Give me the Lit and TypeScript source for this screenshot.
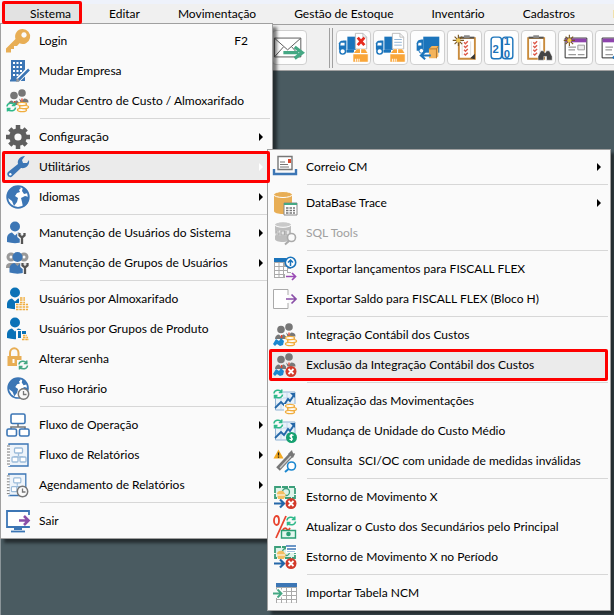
import { LitElement, html, svg, css, nothing, TemplateResult } from "lit";
import { customElement, property } from "lit/decorators.js";
import { classMap } from "lit/directives/class-map.js";

type Art = TemplateResult;

/* ---- shared icon fragments, on a 24 x 24 grid ---- */
const heads = svg`
  <circle cx="8" cy="6.500" r="3.800" fill="#777"/><circle cx="16" cy="4" r="3.800" fill="#777"/>
  <path d="M2 16c0-3 2-4.500 4-4.500l2 2 2-2h1l2 2V16zM13 9.500l3 2.500 2-2.500c3 0 4.500 1 4.500 4h-8z" fill="#777"/>
  <path d="M8.500 12v3M16 9.500v3" stroke="#e8432d" stroke-width="1.300"/>`;
const coins = (x: number, y: number) => svg`<g transform="translate(${x} ${y})" fill="#fff" stroke="#f0ad3e" stroke-width="1.400">
  <ellipse cx="5" cy="9" rx="4.500" ry="1.600"/><ellipse cx="7" cy="6" rx="4.500" ry="1.600"/><ellipse cx="5" cy="3" rx="4.500" ry="1.600"/></g>`;
const xBadge = svg`<circle cx="18" cy="18.500" r="5.500" fill="#d23a2a"/><path d="M15.500 16l5 5m0-5l-5 5" stroke="#fff" stroke-width="1.800"/>`;
const recycle = (x: number, y: number, c: string) => svg`<g transform="translate(${x} ${y})" fill="none" stroke="${c}" stroke-width="1.500">
  <path d="M1 4.500A4 3.500 0 0 1 8.500 3M9.500 5.500A4 3.500 0 0 1 2 7M8.800.500V3.500H5.800M1.500 9.500V6.500H4.500"/></g>`;
const chart = svg`<path d="M2.500 3h19.500v18h-19.500z" fill="#e9f2fa" stroke="#8fb3d3"/>
  <path d="M3 9h18M3 15h18M8 4v17M14 4v17" stroke="#b7cfe6" stroke-width=".7"/>
  <path d="M2 19l6-6 3 3 4-6 2 2 4-6" fill="none" stroke="#2467a8" stroke-width="1.800"/><path d="M17 4h5v5z" fill="#2467a8"/>
  <path d="M0 0h10v9H0z" fill="#fafafa"/>${recycle(0, 0, "#2fb98a")}`;
const note = svg`<path d="M2 2h20v11H2z" fill="#dff3ea" stroke="#3c9f7a" stroke-width="1.800" stroke-dasharray="6 1"/><circle cx="13" cy="7" r="3.500" fill="none" stroke="#3c9f7a" stroke-width="1.300"/>
  <path d="M4 9c0-3 3-3.500 6-3l3 4-2 4H5z" fill="#f3bf62"/><path d="M3 10h9" stroke="#fff"/>
  <path d="M0 14h12v10H0z" fill="#fafafa"/><path d="M1 18.500h9M7 14.500l4 4L7 22.500" fill="none" stroke="#2467a8" stroke-width="2.200"/>${xBadge}`;
const clock = (x: number, y: number) => svg`<circle cx="${x}" cy="${y}" r="5.200" fill="#fafafa" stroke="#777" stroke-width="1.500"/><path d="M${x} ${y - 3}v3.500h3" fill="none" stroke="#777" stroke-width="1.300"/>`;
const spanner = svg`<path d="M16 23v-6m-2.500-5v3l2.500 2 2.500-2v-3" fill="none" stroke="#fafafa" stroke-width="4.500"/><path d="M16 23v-7m-2.500-4v2.500l2.500 2 2.500-2V12" fill="none" stroke="#555" stroke-width="2.300"/>`;
const person = (c: string) => svg`<circle cx="9" cy="5.500" r="5" fill="${c}"/><path d="M1 21v-3c0-4 2-6 5-6.500l3 3 3-3c3 .5 5 2 5 6V21c-5 1.500-11 1.500-16 0z" fill="${c}"/>`;
const globe = svg`<circle cx="12" cy="12" r="10.800" fill="#fff" stroke="#3c76b5" stroke-width="1.800"/>
  <path d="M2 8c2-5 6-7 10-7l3 2-2 2 1 2-3 1-2 3 3 2-1 4-3 4-2-5-4-3z" fill="#3c76b5"/><path d="M17 2l3 2 2 4-4 1-2-3zM15 13l4-2 4 1c0 5-3 9-6 10l-1-5z" fill="#3c76b5"/>`;
const notebook = svg`<path d="M3 1h19v22H3z" fill="#eef4fa" stroke="#3c76b5" stroke-width="1.400"/>
  <path d="M3 2v21" stroke="#fff" stroke-width="2"/><path d="M1 3h3M1 6h3M1 9h3M1 12h3M1 15h3M1 18h3M1 21h3" stroke="#777"/>
  <g fill="#fff" stroke="#9cbcda" stroke-width="1.300"><path d="M12.500 9v4M8 14h9" /><rect x="8.500" y="5" width="8" height="5" rx="1"/><rect x="6" y="14" width="6" height="5" rx="1"/><rect x="14" y="14" width="6" height="5" rx="1"/></g>`;

const art: Record<string, Art> = {
  key: svg`<path fill-rule="evenodd" d="M16.500 0a7.500 7.500 0 1 1-3 14.300L11 17H8v3H5v3.500H0V19.500L9.500 10A7.500 7.500 0 0 1 16.500 0zM18 3.300a2.700 2.700 0 1 0 .01 0z" fill="#e8ae55"/>`,
  building: svg`<path d="M5 1h14v21H5z" fill="#3c76b5"/><path d="M7 4h10M7 8h10M7 12h10M7 16h7" stroke="#fff" stroke-width="2" stroke-dasharray="2 1.500"/>
    <path d="M4 21.500h9" stroke="#3c76b5" stroke-width="2"/><path d="M12 21L23 10" stroke="#fff" stroke-width="5"/><path d="M12 21.500L23 10.500" stroke="#3c76b5" stroke-width="2.500"/><path d="M10 23l1-4 3 3z" fill="#999"/>`,
  center: svg`${heads}<path d="M0 14h8v10H0zM11 14h13v10H11z" fill="#fafafa"/>${recycle(0, 13, "#2fb98a")}${coins(11, 12)}`,
  gear: svg`<g stroke="#5f5f5f" stroke-width="4.500"><path d="M12 0v24M0 12h24M3.800 3.800l16.400 16.400M20.200 3.800L3.800 20.200"/></g><circle cx="12" cy="12" r="8.800" fill="#5f5f5f"/><circle cx="12" cy="12" r="3.600" fill="#fafafa"/>`,
  wrench: svg`<path d="M2 21c-1-1-1-3 0-4L12 9c-1-4 2-8 7-8l-3 4 1 3 4 0 2-3c1 5-3 9-8 8L6 21.500c-1 1-3 1-4-.5z" fill="#3c76b5"/><circle cx="4.300" cy="19.300" r="1.200" fill="#fff"/>`,
  globe,
  user: svg`${person("#3c76b5")}${spanner}`,
  group: svg`<g fill="none" stroke="#999" stroke-width="3"><circle cx="5" cy="6" r="3"/><circle cx="18" cy="6" r="3"/></g><path d="M0 16c0-3 2-4 4-4h15c3 0 4 2 4 5H0z" fill="#999"/><g transform="translate(2.500 .5)">${person("#3c76b5")}</g><g transform="translate(3 0)">${spanner}</g>`,
  userCoins: svg`${person("#0a72b7")}<path d="M9 16h15v8H9zM13 10h7v6h-7z" fill="#fafafa"/><path d="M14 11h5M14 13h5M14 15.500h5M10 17.500h12M10 20h13M10 22.500h12" stroke="#f0ad3e" stroke-width="1.600" stroke-dasharray="2.500 .8"/>`,
  userBoxes: svg`${person("#0a72b7")}<path d="M10 13h14v11H10z" fill="#fafafa"/><path d="M12 14h3v7h-3zM16 14h4v3h-4z" fill="#0a72b7"/><path d="M17 18.500h4M17 20.500h5M16 22.500h7" stroke="#f0ad3e" stroke-width="1.700" stroke-dasharray="2.500 .8"/>`,
  lock: svg`<path d="M4 9V6a4 4.500 0 0 1 8.500 0v3" fill="none" stroke="#e8ae55" stroke-width="2"/><path d="M1.500 9h14v10h-14z" fill="#e8ae55"/><path d="M7.500 12v4" stroke="#fff" stroke-width="2"/><path d="M11 13h13v11H11z" fill="#fafafa"/>${recycle(12, 13, "#45a884")}`,
  timezone: svg`<g transform="translate(1 0) scale(.92)">${globe}</g>${clock(17.500, 17)}`,
  flow: svg`<path d="M12 10v4M5 16v-2h14v2" fill="none" stroke="#777" stroke-width="1.600"/><g fill="#fff" stroke="#3c76b5" stroke-width="1.600"><rect x="5" y="1" width="14" height="9.500" rx="1.500"/><rect x="1" y="16" width="9.500" height="7" rx="1.500"/><rect x="13.500" y="16" width="9.500" height="7" rx="1.500"/></g>`,
  report: notebook,
  schedule: svg`<g transform="scale(.9 .98)">${notebook}</g>${clock(16.500, 18.500)}`,
  exit: svg`<path d="M1 2h22v16H1z" fill="#fff" stroke="#3c76b5" stroke-width="1.800"/><path d="M8 18h8v3H8z" fill="#3c76b5"/><path d="M5 22.500h14" stroke="#3c76b5" stroke-width="1.800"/><path d="M23 6v11" stroke="#fafafa" stroke-width="2.500"/><path d="M13 11.500h9M18 7l4.500 4.500L18 16" fill="none" stroke="#8a4fa8" stroke-width="2.600"/>`,
  mail: svg`<path d="M5 1.500h14v13H5z" fill="#fff" stroke="#777" stroke-width="1.400"/><path d="M15 4h3v4h-3z" fill="#d9492f"/><path d="M7 7h5M7 9.500h8M7 12h9" stroke="#777"/><path d="M1 14v5h22v-5" fill="none" stroke="#3c76b5" stroke-width="2.400"/>`,
  database: svg`<path d="M1 3v17c0 4 17 4 18 0V3z" fill="#e8ae55"/><ellipse cx="10" cy="3.500" rx="9.300" ry="3" fill="#e8ae55" stroke="#fff" stroke-width="1"/><path d="M11 12h13v12H11z" fill="#fff" stroke="#888"/><path d="M11 13h13" stroke="#45a884" stroke-width="2"/><path d="M13 17h9M13 19.500h9M13 22h9" stroke="#777" stroke-width="1.300" stroke-dasharray="2.500 1"/>`,
  sql: svg`<path d="M2 3v15c0 4 15 4 16 0V3z" fill="#bdbdbd"/><ellipse cx="10" cy="3.500" rx="8.300" ry="2.800" fill="#c9c9c9" stroke="#fff"/><path d="M2 9.500h14v5H2z" fill="#e6e6e6"/><path d="M6 10H3v2h3v2H3M8 10h3.500v4H8zM13 10v4h3" fill="none" stroke="#aaa" stroke-width="1.200"/><circle cx="18.500" cy="16.500" r="4" fill="#fafafa" stroke="#aaa" stroke-width="1.600"/><path d="M16 20l-4 3.500" stroke="#aaa" stroke-width="2"/>`,
  exportTable: svg`<path d="M1 1h17v20H1z" fill="#aaa"/><path d="M1 1h12v4H1z" fill="#1b74bb"/><g fill="#fff"><path d="M2 6h3.500v3H2zM6.500 6H10v3H6.500zM2 10h3.500v3H2zM6.500 10H10v3H6.500zM2 14h3.500v3H2zM6.500 14H10v3H6.500zM11 10h3v3h-3zM11 14h3v3h-3zM15 12h3v3h-3zM2 18h3.500v2H2zM6.500 18H10v2H6.500z"/></g>
    <circle cx="17.500" cy="5.500" r="5.200" fill="#fff" stroke="#1b74bb" stroke-width="1.600"/><path d="M17.500 9V3.500M15 5.500l2.500-2.500L20 5.500" fill="none" stroke="#1b74bb" stroke-width="1.500"/><path d="M12 16h12v8H12z" fill="#fafafa"/><path d="M13 19.500h9M19 16l3.500 3.500L19 23" fill="none" stroke="#9a4bb5" stroke-width="1.700"/>`,
  exportPage: svg`<path d="M15 8V2.500H.5v19H15V16" fill="#fff" stroke="#aaa"/><path d="M13 12h9M18.500 7.500L23 12l-4.500 4.500" fill="none" stroke="#8a4fa8" stroke-width="1.700"/>`,
  integrate: svg`${heads}<path d="M0 21l3-5 3 2 2-3 3 3-1 4-3 1-3-2-2 2z" fill="#1b87cf"/><path d="M12 14h12v10H12z" fill="#fafafa"/>${coins(12, 12)}`,
  exclude: svg`${heads}<path d="M0 21l3-5 3 2 2-3 3 3-1 4-3 1-3-2-2 2z" fill="#1b87cf"/>${xBadge}`,
  chartCoins: svg`${chart}<path d="M11 15h13v9H11z" fill="#fafafa"/>${coins(12, 14)}`,
  chartMoney: svg`${chart}<circle cx="18.500" cy="18.500" r="5.500" fill="#16a070"/><path d="M20.500 16.500c-3-1.500-4.500.5-2.500 1.800s2 3.500-1.500 2M18.500 15v7" fill="none" stroke="#fff" stroke-width="1.200"/>`,
  warning: svg`<path d="M5 20L20 4" stroke="#777" stroke-width="5"/><path d="M7 19L19 6" stroke="#ccc" stroke-width="1.300"/><path d="M15 5l4-4 1 4 2-1-2 5z" fill="#777"/><path d="M.5 9.500L5.500.5l5 9z" fill="#f4a91f"/><path d="M5.500 3.500v3M5.500 7.500v1.200" stroke="#222" stroke-width="1.300"/><circle cx="18.500" cy="17" r="4" fill="#fff" stroke="#1b87cf" stroke-width="1.600"/><path d="M15.500 20L12 23" stroke="#1b87cf" stroke-width="2"/>`,
  reverse: note,
  percent: svg`<ellipse cx="3.500" cy="5.500" rx="2.500" ry="4.500" fill="none" stroke="#e8432d" stroke-width="1.800"/><path d="M13 1L3 23" stroke="#e8432d" stroke-width="1.800"/><path d="M9 20c0-7 4-9 6-4l2-3" fill="none" stroke="#e8432d" stroke-width="1.800"/>${recycle(13, 1, "#2fb98a")}<path d="M8.500 15.500h14v7.500h-14z" fill="#e3f6ee" stroke="#2a9f74" stroke-width="1.400"/><circle cx="15.500" cy="19" r="2.300" fill="#2a9f74"/>`,
  reversePeriod: svg`${note}<path d="M13 0h11v8H13z" fill="#fff"/><path d="M13 1h10M14 4h9" stroke="#3c76b5" stroke-width="1.400"/><path d="M14 6.500h8" stroke="#aac6e0"/>`,
  importTable: svg`<path d="M3 2h21v20H3z" fill="#aaa"/><path d="M3 2h21v4H3z" fill="#3c76b5"/><path d="M4 8.500h19M4 12.500h19M4 16.500h19M4 20.300h19" stroke="#fff" stroke-width="2.800" stroke-dasharray="4 1"/><path d="M0 8.500h9l2 3.500-3 5H0z" fill="#fafafa"/><path d="M0 12.500h8M4.500 8.500l4 4-4 4" fill="none" stroke="#45a884" stroke-width="1.800"/>`,
};

/* ---- toolbar artwork, on a 35 x 35 grid ---- */
const van = svg`<path d="M11 6h11v14H11z" fill="#1b74bb"/><path d="M2 13c1-3 3-3 8-3v10H2z" fill="#1b74bb"/><path d="M4 12.500h4v3H3.500z" fill="#fff"/><circle cx="6" cy="21.500" r="3" fill="#fff" stroke="#1b74bb" stroke-width="1.500"/><path d="M10 20h8v3h-8z" fill="#1b74bb"/>`;
const box = svg`<path d="M17 24l4-5h9l3 5v9H17z" fill="#f9a63a" stroke="#fff" stroke-width=".6"/><path d="M17 24h16M25 19v5" stroke="#fff" stroke-width="1.200"/><path d="M19 31h5" stroke="#fff" stroke-dasharray="1 1" stroke-width="3"/>`;
const doc = svg`<path d="M19.500 2.500h8l4 4V19h-12z" fill="#fff" stroke="#bbb"/><path d="M27.500 2.500v4h4" fill="none" stroke="#bbb"/>`;
const board = svg`<path d="M11.500 7.500h17v22h-17z" fill="#fff" stroke="#c98b3c" stroke-width="2"/><path d="M12 6h16v2H12z" fill="#555"/><path d="M17 4.500h6v3h-6z" fill="#888"/><path d="M17 12l1.500 1.500L21 11M17 16l1.500 1.500L21 15M17 20l1.500 1.500L21 19M17 24l1.500 1.500L21 23" fill="none" stroke="#dd5a4a" stroke-width="1.500"/><path d="M15 11v15M24 11v15" stroke="#ddd"/><path d="M28.500 30l-5-1 5-5z" fill="#333"/>`;
const spark = svg`<path d="M11 4v12M5 10h12M7 6l8 8M15 6l-8 8" stroke="#7a5720" stroke-width="1.200"/><circle cx="11" cy="10" r="2.200" fill="#f2c94c"/>`;
const form = svg`<path d="M6.500 7.500h23v21h-23z" fill="#fff" stroke="#222"/><path d="M7 8h22v4H7z" fill="#8e44ad"/><path d="M10 17h8M10 20h7M10 25h8M20 25h7" stroke="#999" stroke-width="1.300"/><path d="M20 15h7v5h-7z" fill="#eee" stroke="#999"/>`;

const toolArt: { label: string; art: Art }[] = [
  { label: "Excluir entrada", art: svg`${van}${doc}<path d="M22 7l7 8m0-8l-7 8" stroke="#e62b1e" stroke-width="3"/>${box}` },
  { label: "Documento de entrada", art: svg`${van}${doc}<path d="M21.500 9h8M21.500 12h8M21.500 15h8" stroke="#8fb3d3"/>${box}` },
  { label: "Devolução", art: svg`<path d="M13 6h17v17H13z" fill="#1b74bb"/><path d="M6 13c1-3 2-4 7-4v12H6z" fill="#1b74bb"/><path d="M8 12.500h3v3H7.500z" fill="#fff"/><circle cx="11" cy="21" r="2.500" fill="#fff" stroke="#1b74bb"/><path d="M19 19l3-3h7v11l-3 2h-7z" fill="#f4b45c"/><path d="M19 19h8v10M27 19l2-3" fill="none" stroke="#b5762a"/><path d="M21 26H12M15 22l-4.500 4 4.500 4" fill="none" stroke="#1b74bb" stroke-width="2.200"/>` },
  { label: "Nova requisição", art: svg`${board}${spark}` },
  { label: "Calendário", art: svg`<rect x="6.500" y="6.500" width="11" height="23" rx="3" fill="#fff" stroke="#1b74bb" stroke-width="1.500"/><rect x="18.500" y="6.500" width="11" height="23" rx="3" fill="#fff" stroke="#1b74bb" stroke-width="1.500"/><text x="8" y="23" class="digit">2</text><text x="20" y="15" class="digit">1</text><text x="20" y="29" class="digit">0</text>` },
  { label: "Localizar requisição", art: svg`<g transform="translate(-5 0)">${board}</g><path d="M17 31v-4l3-6h3l1 2h1l1-2h3l3 6v4h-6v-4h-3v4z" fill="#444" stroke="#fff" stroke-width=".5"/>` },
  { label: "Novo cadastro", art: svg`${form}${spark}` },
  { label: "Editar cadastro", art: svg`${form}<path d="M17 28l6-6 3 3-6 6z" fill="#1b74bb"/>` },
];

interface Item {
  label: string;
  icon: string;
  key?: string;
  more?: boolean;
  marked?: boolean;
  off?: boolean;
  submenu?: Item[][];
}

const utilitiesMenu: Item[][] = [
  [{ label: "Correio CM", icon: "mail", more: true }],
  [
    { label: "DataBase Trace", icon: "database", more: true },
    { label: "SQL Tools", icon: "sql", off: true },
  ],
  [
    { label: "Exportar lançamentos para FISCALL FLEX", icon: "exportTable" },
    { label: "Exportar Saldo para FISCALL FLEX (Bloco H)", icon: "exportPage" },
  ],
  [
    { label: "Integração Contábil dos Custos", icon: "integrate" },
    { label: "Exclusão da Integração Contábil dos Custos", icon: "exclude", marked: true },
  ],
  [
    { label: "Atualização das Movimentações", icon: "chartCoins" },
    { label: "Mudança de Unidade do Custo Médio", icon: "chartMoney" },
    { label: "Consulta  SCI/OC com unidade de medidas inválidas", icon: "warning" },
  ],
  [
    { label: "Estorno de Movimento X", icon: "reverse" },
    { label: "Atualizar o Custo dos Secundários pelo Principal", icon: "percent" },
    { label: "Estorno de Movimento X no Período", icon: "reversePeriod" },
  ],
  [{ label: "Importar Tabela NCM", icon: "importTable" }],
];

const systemMenu: Item[][] = [
  [
    { label: "Login", icon: "key", key: "F2" },
    { label: "Mudar Empresa", icon: "building" },
    { label: "Mudar Centro de Custo / Almoxarifado", icon: "center" },
  ],
  [
    { label: "Configuração", icon: "gear", more: true },
    { label: "Utilitários", icon: "wrench", more: true, marked: true, submenu: utilitiesMenu },
    { label: "Idiomas", icon: "globe", more: true },
  ],
  [
    { label: "Manutenção de Usuários do Sistema", icon: "user", more: true },
    { label: "Manutenção de Grupos de Usuários", icon: "group", more: true },
  ],
  [
    { label: "Usuários por Almoxarifado", icon: "userCoins" },
    { label: "Usuários por Grupos de Produto", icon: "userBoxes" },
    { label: "Alterar senha", icon: "lock" },
    { label: "Fuso Horário", icon: "timezone" },
  ],
  [
    { label: "Fluxo de Operação", icon: "flow", more: true },
    { label: "Fluxo de Relatórios", icon: "report", more: true },
    { label: "Agendamento de Relatórios", icon: "schedule", more: true },
  ],
  [{ label: "Sair", icon: "exit" }],
];

@customElement("popup-menu")
export class PopupMenu extends LitElement {
  @property({ attribute: false }) groups: Item[][] = [];

  static styles = css`
    :host {
      display: block;
      box-sizing: border-box;
      border: 1px solid #a0a0a0;
      padding: 2px;
      background: #fafafa;
      box-shadow: 4px 4px 3px rgba(0, 0, 0, 0.5);
    }
    .group + .group::before {
      content: "";
      display: block;
      height: 1px;
      margin: 2px 0 3px 37px;
      background: #d7d7d7;
    }
    .entry {
      position: relative;
    }
    .item {
      all: unset;
      box-sizing: border-box;
      display: flex;
      align-items: center;
      width: 100%;
      height: 30px;
      padding: 0 7px 0 3px;
      color: #000;
      white-space: pre;
    }
    .icon {
      flex: none;
      width: 24px;
      height: 24px;
      margin-right: 9px;
      overflow: visible;
    }
    .label {
      flex: 1;
    }
    .shortcut {
      margin-right: 15px;
    }
    .arrow {
      border: 4px solid transparent;
      border-left-color: #000;
      border-right-width: 0;
    }
    .marked .item {
      background: #ebebeb;
    }
    .marked::after {
      content: "";
      position: absolute;
      inset: -1px 0 -1px -1px;
      border: 3px solid #fe0000;
      border-radius: 2px;
      z-index: 2;
      pointer-events: none;
    }
    .open .arrow {
      border-left-color: #fff;
    }
    .off {
      color: #a0a0a0;
    }
    .submenu {
      position: absolute;
      z-index: 1;
      top: -3px;
      left: calc(100% - 3px);
      width: 344px;
    }
  `;

  private entry(item: Item): TemplateResult {
    return html`<div class=${classMap({ entry: true, marked: !!item.marked, open: !!item.submenu })}>
      <button class=${classMap({ item: true, off: !!item.off })} role="menuitem" ?disabled=${item.off}>
        <svg class="icon" viewBox="0 0 24 24" aria-hidden="true">${art[item.icon]}</svg><span class="label">${item.label}</span>${item.key ? html`<span class="shortcut">${item.key}</span>` : nothing}${item.more ? html`<span class="arrow"></span>` : nothing}
      </button>
      ${item.submenu ? html`<popup-menu class="submenu" role="menu" .groups=${item.submenu}></popup-menu>` : nothing}
    </div>`;
  }

  render() {
    return this.groups.map((group) => html`<div class="group" role="group">${group.map((item) => this.entry(item))}</div>`);
  }
}

@customElement("app-root")
export class AppRoot extends LitElement {
  static styles = css`
    :host {
      display: flex;
      flex-direction: column;
      position: relative;
      min-height: 100vh;
      overflow: hidden;
      background: #4a5b61;
      color: #000;
      font: 12px/16px Lato, "Open Sans", "Noto Sans", sans-serif;
    }
    .menubar {
      display: flex;
      height: 20px;
      border-top: 4px solid #eef2fb;
      background: #f0f0f0;
    }
    .title {
      all: unset;
      box-sizing: border-box;
      flex: none;
      padding: 0 19px;
      line-height: 20px;
      position: relative;
    }
    .current {
      margin: 0 8px 0 2px;
      padding: 0 11px 0 28px;
      background: #e2e2e2;
    }
    .current::after {
      content: "";
      position: absolute;
      inset: -3px 0 0;
      border: 3px solid #fe0000;
      border-radius: 2px;
      z-index: 2;
    }
    .toolbar {
      display: flex;
      align-items: center;
      gap: 2px;
      height: 45px;
      padding-left: 272px;
      border-top: 1px solid #a0a0a0;
      border-bottom: 1px solid #a0a0a0;
      background: #f0f0f0;
    }
    .tool {
      box-sizing: border-box;
      flex: none;
      width: 35px;
      height: 35px;
      padding: 0;
      border: 1px solid #cfcfcf;
      border-radius: 4px;
      background: #fdfdfd;
    }
    .tool svg {
      display: block;
      width: 33px;
      height: 33px;
    }
    .digit {
      font: bold 12px/12px "Liberation Sans", sans-serif;
      fill: #1b74bb;
    }
    .grip {
      flex: none;
      box-sizing: border-box;
      width: 4px;
      height: 40px;
      margin: 0 1px 0 20px;
      border: solid #a0a0a0;
      border-width: 0 1px;
    }
    .workspace {
      flex: 1;
      border-left: 1px solid #8b9599;
    }
    .system {
      position: absolute;
      top: 23px;
      left: 0;
      width: 273px;
    }
  `;

  render() {
    const titles = ["Sistema", "Editar", "Movimentação", "Gestão de Estoque", "Inventário", "Cadastros", "Notas"];
    return html`
      <nav class="menubar" role="menubar">
        ${titles.map((t, i) => html`<button class=${classMap({ title: true, current: i === 0 })} role="menuitem">${t}</button>`)}
      </nav>
      <div class="toolbar" role="toolbar">
        <button class="tool" aria-label="Enviar">
          <svg viewBox="0 0 35 35"><path d="M1.500 7.500h28v20h-28z" fill="#fff" stroke="#555"/><path d="M2 8l13.500 12L29 8M2 27l9-10M29 27l-9-10" fill="none" stroke="#555"/><path d="M11 23h16M23 17l8 6-8 6" fill="none" stroke="#45a884" stroke-width="3.500"/></svg>
        </button>
        <span class="grip"></span>
        ${toolArt.map((t) => html`<button class="tool" aria-label=${t.label}><svg viewBox="0 0 35 35">${t.art}</svg></button>`)}
      </div>
      <main class="workspace"></main>
      <popup-menu class="system" role="menu" .groups=${systemMenu}></popup-menu>
    `;
  }
}
